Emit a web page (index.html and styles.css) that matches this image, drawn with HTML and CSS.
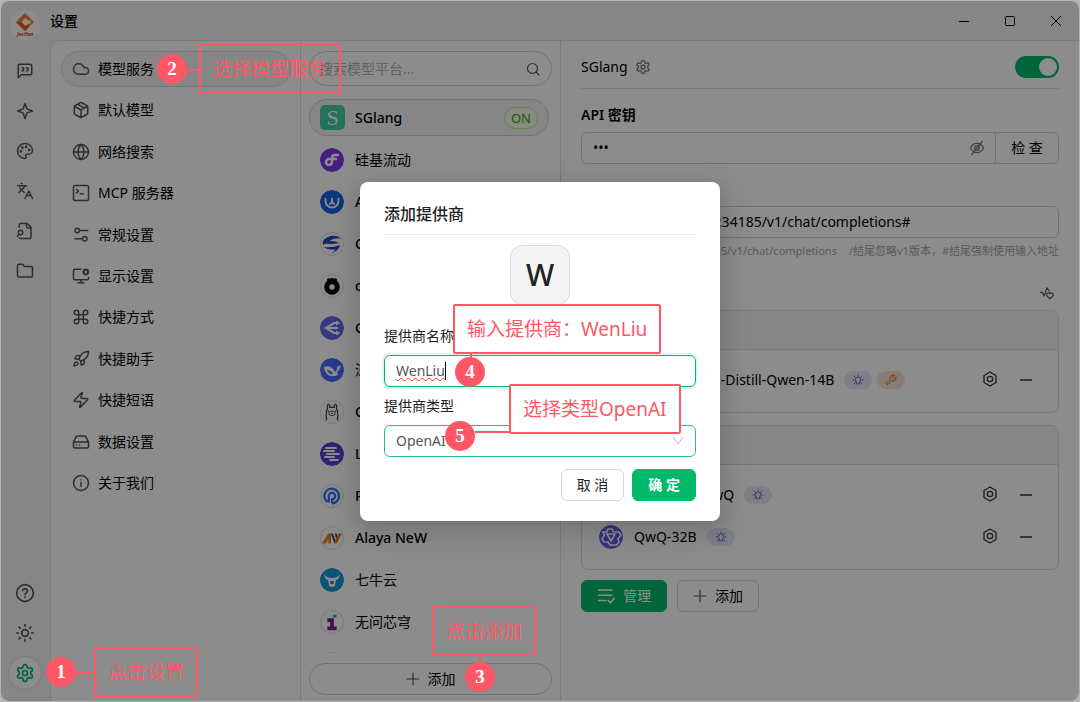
FILE: index.html
```html
<!DOCTYPE html>
<html lang="zh-CN">
<head>
  <meta charset="UTF-8">
  <meta name="viewport" content="width=device-width, initial-scale=1.0">
  <title>设置</title>
  <link rel="stylesheet" href="styles.css">
</head>
<body>

  <!-- Shared icons -->
  <svg class="sprite" aria-hidden="true">
    <symbol id="i-gear" viewBox="0 0 24 24"><path d="M12.2 2h-.4a2 2 0 0 0-2 2v.2a2 2 0 0 1-1 1.7l-.4.3a2 2 0 0 1-2 0l-.2-.1a2 2 0 0 0-2.7.7l-.2.4a2 2 0 0 0 .7 2.7l.2.1a2 2 0 0 1 1 1.7v.5a2 2 0 0 1-1 1.8l-.2.1a2 2 0 0 0-.7 2.7l.2.4a2 2 0 0 0 2.7.7l.2-.1a2 2 0 0 1 2 0l.4.3a2 2 0 0 1 1 1.7v.2a2 2 0 0 0 2 2h.4a2 2 0 0 0 2-2v-.2a2 2 0 0 1 1-1.7l.4-.3a2 2 0 0 1 2 0l.2.1a2 2 0 0 0 2.7-.7l.2-.4a2 2 0 0 0-.7-2.7l-.2-.1a2 2 0 0 1-1-1.8v-.5a2 2 0 0 1 1-1.7l.2-.1a2 2 0 0 0 .7-2.7l-.2-.4a2 2 0 0 0-2.7-.7l-.2.1a2 2 0 0 1-2 0l-.4-.3a2 2 0 0 1-1-1.7V4a2 2 0 0 0-2-2z"/><circle cx="12" cy="12" r="3"/></symbol>
    <symbol id="i-plus" viewBox="0 0 24 24"><path d="M12 2v20M2 12h20"/></symbol>
    <symbol id="i-nut" viewBox="0 0 24 24"><path d="M12 1.5 21 6.7v10.6L12 22.5 3 17.3V6.7z"/><circle cx="12" cy="12" r="4"/></symbol>
    <symbol id="i-bulb" viewBox="0 0 24 24"><path d="M9 19v-3a5.5 5.5 0 1 1 6 0v3zM12 2v2M2 12h2.500M19.500 12H22M4 4l3 3M20 4l-3 3M4 20l3-3M20 20l-3-3"/></symbol>
    <symbol id="i-tool" viewBox="0 0 24 24"><path d="M14.700 6.300a1 1 0 0 0 0 1.400l1.600 1.600a1 1 0 0 0 1.400 0l3.770-3.770a6 6 0 0 1-7.940 7.940l-6.910 6.910a2.120 2.120 0 0 1-3-3l6.910-6.910a6 6 0 0 1 7.940-7.940z"/></symbol>
  </svg>

  <!-- App Window -->
  <div class="window">
    <header class="titlebar">
      <div class="logo">
        <svg viewBox="0 0 30 30"><circle cx="15" cy="15" r="15" fill="#fff"/><path d="M15 3 24 12 15 21 6 12z" fill="#f08a24"/><path d="M6 12 15 21l4-4-5-5z" fill="#e05a1c"/><path d="M15.500 8 20 12l-4.500 4-4-4z" fill="#fff"/><path d="M18 10.500h6v3h-6z" fill="#fff"/><path d="M20 12l2-2 2 2-2 2z" fill="#f08a24"/><text x="15" y="26" text-anchor="middle" class="logo-text">JeeHon</text></svg>
      </div>
      <h1>设置</h1>
      <div class="controls">
        <button aria-label="最小化"><svg viewBox="0 0 10 10"><path d="M0 5.500h10"/></svg></button>
        <button aria-label="最大化"><svg viewBox="0 0 10 10"><rect x=".5" y=".5" width="9" height="9" rx="1"/></svg></button>
        <button aria-label="关闭"><svg viewBox="0 0 10 10"><path d="M0 0l10 10M10 0 0 10"/></svg></button>
      </div>
    </header>

    <div class="body">
      <!-- Icon Rail -->
      <nav class="rail">
        <div class="rail-group">
          <button aria-label="助手"><svg class="icon" viewBox="0 0 24 24"><path d="M21 15a2 2 0 0 1-2 2H7l-4 4V5a2 2 0 0 1 2-2h14a2 2 0 0 1 2 2z"/><path d="M8 12a2 2 0 0 0 2-2V8H8M14 12a2 2 0 0 0 2-2V8h-2"/></svg></button>
          <button aria-label="智能体"><svg class="icon" viewBox="0 0 24 24"><path d="M12 2l2.200 6.300a2.500 2.500 0 0 0 1.500 1.500L22 12l-6.300 2.200a2.500 2.500 0 0 0-1.500 1.500L12 22l-2.200-6.300a2.500 2.500 0 0 0-1.500-1.500L2 12l6.300-2.200a2.500 2.500 0 0 0 1.500-1.500z"/></svg></button>
          <button aria-label="绘画"><svg class="icon" viewBox="0 0 24 24"><circle cx="13.500" cy="6.500" r=".8"/><circle cx="17.500" cy="10.500" r=".8"/><circle cx="8.500" cy="7.500" r=".8"/><circle cx="6.500" cy="12.500" r=".8"/><path d="M12 2C6.500 2 2 6.500 2 12s4.500 10 10 10c.93 0 1.650-.75 1.650-1.690 0-.44-.18-.83-.44-1.120-.29-.29-.44-.65-.44-1.130a1.640 1.640 0 0 1 1.670-1.670h2c3.050 0 5.550-2.500 5.550-5.550C21.960 6.010 17.460 2 12 2z"/></svg></button>
          <button aria-label="翻译"><svg class="icon" viewBox="0 0 24 24"><path d="m5 8 6 6M4 14l6-6 2-3M2 5h12M7 2h1M22 22l-5-10-5 10M14 18h6"/></svg></button>
          <button aria-label="知识库"><svg class="icon" viewBox="0 0 24 24"><path d="M14 2v4a2 2 0 0 0 2 2h4"/><path d="M4.300 7V4a2 2 0 0 1 2-2H15l5 5v13a2 2 0 0 1-2 2H6a2 2 0 0 1-1.700-1"/><circle cx="6" cy="14" r="3"/><path d="m2 19 2-2.500"/></svg></button>
          <button aria-label="文件"><svg class="icon" viewBox="0 0 24 24"><path d="M20 20a2 2 0 0 0 2-2V8a2 2 0 0 0-2-2h-7.900a2 2 0 0 1-1.690-.9L9.600 3.900A2 2 0 0 0 7.930 3H4a2 2 0 0 0-2 2v13a2 2 0 0 0 2 2z"/></svg></button>
        </div>
        <div class="rail-group">
          <button aria-label="帮助"><svg class="icon large" viewBox="0 0 24 24"><circle cx="12" cy="12" r="10"/><path d="M9.090 9a3 3 0 0 1 5.830 1c0 2-3 2-3 4M12 17h.01"/></svg></button>
          <button aria-label="主题"><svg class="icon large" viewBox="0 0 24 24"><circle cx="12" cy="12" r="4"/><path d="M12 2v2M12 20v2M4.900 4.900l1.400 1.400M17.700 17.700l1.400 1.400M2 12h2M20 12h2M6.300 17.700l-1.400 1.400M19.100 4.900l-1.400 1.400"/></svg></button>
          <button class="active" aria-label="设置"><svg class="icon large"><use href="#i-gear"/></svg></button>
        </div>
      </nav>

      <main class="panel">
        <!-- Settings Menu -->
        <nav class="menu">
          <a href="#" class="active"><svg class="icon" viewBox="0 0 24 24"><path d="M17.500 19H9a7 7 0 1 1 6.710-9h1.790a4.500 4.500 0 1 1 0 9z"/></svg>模型服务</a>
          <a href="#"><svg class="icon" viewBox="0 0 24 24"><path d="M11 21.700a2 2 0 0 0 2 0l7-4a2 2 0 0 0 1-1.700V8a2 2 0 0 0-1-1.700l-7-4a2 2 0 0 0-2 0l-7 4A2 2 0 0 0 3 8v8a2 2 0 0 0 1 1.700zM12 22V12M3.300 7l8.700 5 8.700-5M7.500 4.300l9 5.100"/></svg>默认模型</a>
          <a href="#"><svg class="icon" viewBox="0 0 24 24"><circle cx="12" cy="12" r="10"/><path d="M12 2a14.500 14.500 0 0 0 0 20 14.500 14.500 0 0 0 0-20M2 12h20"/></svg>网络搜索</a>
          <a href="#"><svg class="icon" viewBox="0 0 24 24"><rect x="2" y="2" width="20" height="20" rx="2"/><path d="m6 7 2.500 2.500L6 12M11 13h4"/></svg>MCP 服务器</a>
          <a href="#"><svg class="icon" viewBox="0 0 24 24"><circle cx="7" cy="6" r="3"/><circle cx="17" cy="17" r="3"/><path d="M10 6h11M14 17H4"/></svg>常规设置</a>
          <a href="#"><svg class="icon" viewBox="0 0 24 24"><path d="M12 3H4a2 2 0 0 0-2 2v10a2 2 0 0 0 2 2h16a2 2 0 0 0 2-2v-1M12 17v4M8 21h8"/><circle cx="18.500" cy="6.500" r="3"/><path d="M18.500 2.500v1M18.500 9.500v1M14.500 6.500h1M21.500 6.500h1M15.700 3.700l.8.8M20.500 8.500l.8.8M21.300 3.700l-.8.8M16.500 8.500l-.8.8"/></svg>显示设置</a>
          <a href="#"><svg class="icon" viewBox="0 0 24 24"><path d="M15 6v12a3 3 0 1 0 3-3H6a3 3 0 1 0 3 3V6a3 3 0 1 0-3 3h12a3 3 0 1 0-3-3"/></svg>快捷方式</a>
          <a href="#"><svg class="icon" viewBox="0 0 24 24"><path d="M4.500 16.500c-1.500 1.260-2 5-2 5s3.740-.5 5-2c.71-.84.7-2.130-.09-2.910a2.180 2.180 0 0 0-2.910-.09zM12 15l-3-3a22 22 0 0 1 2-3.950A12.880 12.880 0 0 1 22 2c0 2.720-.78 7.500-6 11a22.350 22.350 0 0 1-4 2zM9 12H4s.55-3.030 2-4c1.620-1.080 5 0 5 0M12 15v5s3.030-.55 4-2c1.080-1.620 0-5 0-5"/></svg>快捷助手</a>
          <a href="#"><svg class="icon" viewBox="0 0 24 24"><path d="M4 14a1 1 0 0 1-.78-1.630l9.900-10.200a.5.5 0 0 1 .86.46l-1.920 6.020A1 1 0 0 0 13 10h7a1 1 0 0 1 .78 1.630l-9.900 10.200a.5.5 0 0 1-.86-.46l1.920-6.020A1 1 0 0 0 11 14z"/></svg>快捷短语</a>
          <a href="#"><svg class="icon" viewBox="0 0 24 24"><path d="M22 12H2M5.450 5.110 2 12v6a2 2 0 0 0 2 2h16a2 2 0 0 0 2-2v-6l-3.450-6.890A2 2 0 0 0 16.760 4H7.240a2 2 0 0 0-1.790 1.110zM6 16h.01M10 16h.01"/></svg>数据设置</a>
          <a href="#"><svg class="icon" viewBox="0 0 24 24"><circle cx="12" cy="12" r="10"/><path d="M12 16.500V11M12 7.500h.01"/></svg>关于我们</a>
        </nav>

        <!-- Provider List -->
        <section class="providers">
          <label class="search">
            <input type="text" placeholder="搜索模型平台..." aria-label="搜索模型平台">
            <svg class="icon small" viewBox="0 0 24 24"><circle cx="11" cy="11" r="8.500"/><path d="m17.500 17.500 5 5"/></svg>
          </label>
          <ul class="provider-list">
            <li class="active latin"><span class="letter">S</span>SGlang<span class="on">ON</span></li>
            <li><svg class="avatar" viewBox="0 0 24 24"><circle cx="12" cy="12" r="12" fill="#7c3aed"/><path d="M19 7h-4.500q-2.500 0-2.500 3v4a3 3 0 1 1-3-3h8" fill="none" stroke="#fff" stroke-width="2.600"/></svg>硅基流动</li>
            <li class="latin"><svg class="avatar" viewBox="0 0 24 24"><circle cx="12" cy="12" r="12" fill="#1765e0"/><path d="M5.500 8v3a6.500 6.500 0 0 0 13 0V8M12 8v2q0 4-3 4M12 10q0 4 3 4" fill="none" stroke="#fff" stroke-width="1.800"/></svg>AiHubMix</li>
            <li class="latin"><svg class="avatar ring" viewBox="0 0 24 24"><path d="M2 9q4-6 12-6 5 0 8 3-8-1-13 3 5-1 11 2-6 1-11 1-4-1-7 1z" fill="#2347c5"/><path d="M2 15q9 2 19-2-2 7-10 9 4-2 5-4-8 1-14-3z" fill="#2347c5"/></svg>Cephalon</li>
            <li class="latin"><svg class="avatar ring" viewBox="0 0 24 24"><circle cx="12" cy="13" r="8.500"/><circle cx="8.500" cy="5.500" r="2"/><circle cx="12" cy="5" r="2"/><circle cx="15.500" cy="5.500" r="2"/><circle cx="12" cy="13" r="3" fill="#fff"/></svg>ocoolAI</li>
            <li class="latin"><svg class="avatar" viewBox="0 0 24 24"><circle cx="12" cy="12" r="12" fill="#6366f1"/><path d="M17 7h-3L6 12l8 5h3M7 12h11" fill="none" stroke="#fff" stroke-width="2.200"/><path d="M16 4.500 20 7l-4 2.500zM16 14.500l4 2.500-4 2.500z" fill="#fff"/></svg>GPUStack</li>
            <li><svg class="avatar" viewBox="0 0 24 24"><circle cx="12" cy="12" r="12" fill="#4d6bfe"/><path d="M4 9q5-2 8 1 2 2 3 4 3-2 2-6 2 1 4-1-1 5-4 7l1 3q-7 3-11-1-3-3-3-7z" fill="#fff"/><path d="M7 12q4 0 6 4-4 1-6-4" fill="#4d6bfe"/></svg>深度求索</li>
            <li class="latin"><svg class="avatar ring" viewBox="0 0 24 24"><path d="M6 21v-3q-1-2 0-4-1-3 1-5V5q1-3 2.500 0v2h5V5q1-3 2.500 0v4q2 2 1 5 1 2 0 4v3" fill="none" stroke="#444" stroke-width="1.400"/><ellipse cx="12" cy="13.500" rx="3.500" ry="2.500" fill="none" stroke="#444"/><path d="M8 11h.01M16 11h.01M12 13.500h.01" stroke="#222" stroke-width="1.500" stroke-linecap="round"/></svg>Ollama</li>
            <li class="latin"><svg class="avatar" viewBox="0 0 24 24"><circle cx="12" cy="12" r="12" fill="#5b3fd6"/><path d="M6 6h10M4 9h10M7 12h12M5 15h9M10 18h8" stroke="#fff" stroke-width="1.800" stroke-linecap="round"/></svg>LM Studio</li>
            <li class="latin"><svg class="avatar ring" viewBox="0 0 24 24"><path d="M7 18.500A8 8 0 1 1 12 20M12 20v-4.500a3.500 3.500 0 1 0-3.500-3.500v7" fill="none" stroke="#2874ff" stroke-width="2.400"/></svg>PPIO 派欧云</li>
            <li class="latin"><svg class="avatar ring" viewBox="0 0 24 24"><path d="M1 18 8 7h3v11H8v-4l-3 4z" fill="#e8811a"/><path d="M11 7h2l3 8-1.500 3zM15 7h2l1 4-1 3z" fill="#444"/><path d="M14 18l5-11h4l-6 11z" fill="#e8811a"/></svg>Alaya NeW</li>
            <li><svg class="avatar" viewBox="0 0 24 24"><circle cx="12" cy="12" r="12" fill="#159bd3"/><path d="M4 6q2 4 8 4t8-4q-1 6-4 6l-1 6q-3 2-6 0l-1-6Q5 12 4 6z" fill="#fff"/><path d="M10 13h4l-.5 3h-3z" fill="#159bd3"/></svg>七牛云</li>
            <li><svg class="avatar ring" viewBox="0 0 24 24"><path d="M7 8h7v9h3v4H7v-4h3v-5H7z" fill="#86198f"/><path d="M13 4h4v3h-4z" fill="#22a7e0"/></svg>无问芯穹</li>
            <li><svg class="avatar ring" viewBox="0 0 24 24"><path d="M8 1h8v10H8z" fill="#16a36a"/></svg></li>
          </ul>
          <button class="add-provider"><svg class="icon small"><use href="#i-plus"/></svg>添加</button>
        </section>

        <!-- Provider Detail -->
        <section class="detail">
          <div class="detail-head">
            <h2>SGlang</h2>
            <svg class="icon gray"><use href="#i-gear"/></svg>
            <input type="checkbox" class="switch" aria-label="启用" checked>
          </div>
          <h3><label for="api-key">API 密钥</label></h3>
          <div class="field">
            <input type="password" id="api-key" value="abc">
            <svg class="icon gray" viewBox="0 0 24 24"><path d="M2 12q4-7 10-7t10 7q-4 7-10 7T2 12zM20 2 4 22"/><circle cx="12" cy="12" r="3.500"/></svg>
            <button>检 查</button>
          </div>
          <h3><label for="api-url">API 地址</label></h3>
          <div class="field">
            <input type="text" id="api-url" value="http://10.12.40.128:34185/v1/chat/completions#">
          </div>
          <p class="hint"><span>http://10.12.40.128:34185/v1/chat/completions</span><span>/结尾忽略v1版本，#结尾强制使用输入地址</span></p>
          <div class="models-head">
            <h3>模型</h3>
            <svg class="icon small" viewBox="0 0 24 24"><path d="M1 11h3l3 6 5-14 4 6"/><path d="M17 22l-5-5a3 3 0 0 1 5-4 3 3 0 0 1 5 4z"/></svg>
          </div>

          <div class="card">
            <div class="card-head">deepseek</div>
            <div class="model">
              <svg class="avatar" viewBox="0 0 24 24"><circle cx="12" cy="12" r="12" fill="#4d6bfe"/></svg>
              <span>DeepSeek-R1-Distill-Qwen-14B</span>
              <span class="tag"><svg class="icon tiny"><use href="#i-bulb"/></svg></span>
              <span class="tag tool"><svg class="icon tiny"><use href="#i-tool"/></svg></span>
              <button class="nut" aria-label="模型设置"><svg class="icon"><use href="#i-nut"/></svg></button>
              <button aria-label="移除" class="minus"></button>
            </div>
          </div>

          <div class="card">
            <div class="card-head">qwen</div>
            <div class="model">
              <svg class="avatar" viewBox="0 0 24 24"><circle cx="12" cy="12" r="12" fill="#615ced"/></svg>
              <span>Qwen-3.0-QwQ</span>
              <span class="tag"><svg class="icon tiny"><use href="#i-bulb"/></svg></span>
              <button class="nut" aria-label="模型设置"><svg class="icon"><use href="#i-nut"/></svg></button>
              <button aria-label="移除" class="minus"></button>
            </div>
            <div class="model">
              <svg class="avatar" viewBox="0 0 24 24"><circle cx="12" cy="12" r="12" fill="#615ced"/><path d="M9 4h4l1.500 3H20l2 3-3 4 1 3-2 3h-4l-3 0-2-3H5l-2-3 2.500-4L4 7h4z" fill="none" stroke="#fff" stroke-width="1.600"/><path d="M8 9h8l-4 7z" fill="none" stroke="#fff" stroke-width="1.600"/></svg>
              <span>QwQ-32B</span>
              <span class="tag"><svg class="icon tiny"><use href="#i-bulb"/></svg></span>
              <button class="nut" aria-label="模型设置"><svg class="icon"><use href="#i-nut"/></svg></button>
              <button aria-label="移除" class="minus"></button>
            </div>
          </div>

          <div class="actions">
            <button class="btn primary"><svg class="icon" viewBox="0 0 24 24"><path d="M2 4h18M2 11h18M2 18h10M15 18l3 3 5-6"/></svg>管理</button>
            <button class="btn"><svg class="icon small"><use href="#i-plus"/></svg>添加</button>
          </div>
        </section>
      </main>
    </div>

    <!-- Add Provider Dialog -->
    <div class="mask">
      <form class="modal" role="dialog" aria-labelledby="modal-title">
        <h2 id="modal-title">添加提供商</h2>
        <div class="modal-avatar">W</div>
        <label for="name">提供商名称</label>
        <div class="box focused">
          <input type="text" id="name" value="WenLiu" size="6" spellcheck="false">
          <span class="caret"></span>
        </div>
        <label for="type">提供商类型</label>
        <div class="box">
          <select id="type"><option>OpenAI</option></select>
          <svg class="arrow" viewBox="0 0 12 12"><path d="M1 2l5 7 5-7"/></svg>
        </div>
        <div class="modal-actions">
          <button type="button" class="btn">取 消</button>
          <button type="button" class="btn primary">确 定</button>
        </div>
      </form>
    </div>
  </div>

  <!-- Step Callouts -->
  <div class="note n1">点击设置</div><i class="line l1"></i><b class="step s1">1</b>
  <div class="note n2">选择模型服务</div><i class="line l2"></i><b class="step s2">2</b>
  <div class="note n3">点击添加</div><i class="line l3"></i><b class="step s3">3</b>
  <div class="note solid n4">输入提供商：WenLiu</div><i class="line l4"></i><b class="step s4">4</b>
  <div class="note solid n5">选择类型OpenAI</div><i class="line l5"></i><b class="step s5">5</b>

</body>
</html>
```
FILE: styles.css
```css
/* Global Styles */
* {
  box-sizing: border-box;
}

body {
  margin: 0;
  padding: 1px;
  height: 100vh;
  overflow: hidden;
  background: #b4b4b4;
  font-family: "Noto Sans", "Noto Sans CJK SC", sans-serif;
  font-size: 14px;
  line-height: 22px;
  color: #000;
}

button,
input,
select {
  font: inherit;
  color: inherit;
  padding: 0;
  border: none;
  background: none;
  outline: none;
}

button {
  cursor: pointer;
}

h1,
h2,
h3,
p,
ul {
  margin: 0;
  padding: 0;
  font-size: 14px;
  font-weight: 400;
}

.sprite {
  position: absolute;
  width: 0;
  height: 0;
}

/* Icons */
.icon {
  width: 18px;
  height: 18px;
  flex: none;
  fill: none;
  stroke: #555;
  stroke-width: 2;
  stroke-linecap: round;
  stroke-linejoin: round;
}

.icon.large {
  width: 20px;
  height: 20px;
}

.icon.small {
  width: 14px;
  height: 14px;
}

.icon.tiny {
  width: 12px;
  height: 12px;
}

.icon.gray {
  width: 16px;
  height: 16px;
  stroke: #777;
}

/* Window */
.window {
  position: relative;
  height: 100%;
  display: flex;
  flex-direction: column;
  border-radius: 8px;
  overflow: hidden;
  background: #f4f4f4;
}

.titlebar {
  height: 39px;
  flex: none;
  display: flex;
  align-items: center;
}

.titlebar h1 {
  font-weight: 500;
}

.logo {
  width: 49px;
  height: 30px;
  padding-left: 9px;
  align-self: end;
}

.logo svg {
  width: 30px;
  height: 30px;
  display: block;
}

.logo-text {
  font-size: 5px;
  font-weight: bold;
  font-style: italic;
  fill: #d9481c;
}

.controls {
  margin-left: auto;
  display: flex;
}

.controls button {
  width: 46px;
  height: 39px;
}

.controls svg {
  width: 10px;
  height: 10px;
  fill: none;
  stroke: #000;
  overflow: visible;
}

.body {
  flex: 1;
  display: flex;
  min-height: 0;
}

/* Icon Rail */
.rail {
  width: 49px;
  flex: none;
  display: flex;
  flex-direction: column;
  justify-content: space-between;
  padding: 15px 8px 12px;
}

.rail-group {
  display: flex;
  flex-direction: column;
  gap: 8px;
}

.rail button {
  width: 32px;
  height: 32px;
  display: flex;
  align-items: center;
  justify-content: center;
  border-radius: 50%;
}

.rail .active {
  background: #fff;
  box-shadow: 0 0 0 1px #e2e2e2;
}

.rail .active .icon {
  stroke: #00b96b;
}

.panel {
  flex: 1;
  min-width: 0;
  display: flex;
  background: #fff;
  border: 1px solid #e4e4e4;
  border-width: 1px 0 0 1px;
  border-radius: 10px 0 0 0;
}

/* Settings Menu */
.menu {
  width: 249px;
  height: 470px;
  flex: none;
  display: flex;
  flex-direction: column;
  justify-content: space-between;
  padding: 10px 9px 10px 10px;
}

.menu a {
  height: 36px;
  display: flex;
  align-items: center;
  gap: 8px;
  padding: 0 10px;
  border: 1px solid transparent;
  border-radius: 18px;
  color: #000;
  text-decoration: none;
}

.menu .active {
  background: #f4f4f4;
  border-color: #d9d9d9;
}

/* Provider List */
.providers {
  width: 261px;
  flex: none;
  display: flex;
  flex-direction: column;
  padding: 10px 8px 6px;
  border: 1px solid #e0e0e0;
  border-width: 0 1px;
}

.search {
  height: 35px;
  flex: none;
  display: flex;
  align-items: center;
  padding: 0 11px 0 9px;
  border: 1px solid #d0d0d0;
  border-radius: 18px;
}

.search input {
  flex: 1;
  min-width: 0;
}

.search input::placeholder {
  color: #b5b5b5;
}

.provider-list {
  flex: 1;
  min-height: 0;
  overflow: hidden;
  margin: 13px 3px 10px 0;
  display: flex;
  flex-direction: column;
  gap: 5px;
  list-style: none;
}

.provider-list li {
  height: 37px;
  flex: none;
  display: flex;
  align-items: center;
  gap: 10px;
  padding: 0 10px;
  border: 1px solid transparent;
  border-radius: 18px;
  line-height: 20px;
}

.provider-list .latin {
  font-weight: 500;
}

.provider-list .active {
  background: #f4f4f4;
  border-color: #d0d0d0;
}

.avatar {
  width: 24px;
  height: 24px;
  flex: none;
  border-radius: 50%;
}

.provider-list .avatar {
  margin-right: 1px;
}

.ring {
  border: 1px solid #dedede;
}

.letter {
  width: 25px;
  height: 25px;
  border-radius: 5px;
  background: #43cfa5;
  color: #fff;
  font-family: "Liberation Serif", serif;
  font-size: 22px;
  font-weight: 400;
  line-height: 25px;
  text-align: center;
}

.on {
  margin-left: auto;
  padding: 0 6px;
  border: 1px solid #b7eb8f;
  border-radius: 11px;
  background: #f6ffed;
  color: #389e0d;
  font-size: 13px;
  font-weight: 400;
}

.add-provider {
  height: 32px;
  flex: none;
  display: flex;
  align-items: center;
  justify-content: center;
  gap: 8px;
  border: 1px solid #d0d0d0;
  border-radius: 16px;
}

/* Provider Detail */
.detail {
  flex: 1;
  min-width: 0;
  padding: 5px 20px;
}

.detail h3 {
  margin: 15px 0 6px;
  font-weight: 600;
}

.detail .field + h3 {
  margin-top: 14px;
}

.detail-head {
  height: 43px;
  display: flex;
  align-items: center;
  gap: 7px;
  border-bottom: 1px solid #e4e4e4;
}

.switch {
  appearance: none;
  width: 44px;
  height: 22px;
  margin: 0 0 0 auto;
  padding: 2px;
  border-radius: 11px;
  background: #00b96b;
}

.switch::before {
  content: "";
  display: block;
  width: 18px;
  height: 18px;
  margin-left: auto;
  border-radius: 50%;
  background: #fff;
}

.field {
  height: 32px;
  display: flex;
  align-items: center;
  padding-left: 11px;
  border: 1px solid #d0d0d0;
  border-radius: 6px;
}

.field input {
  flex: 1;
  min-width: 0;
}

.field button {
  width: 63px;
  height: 30px;
  margin-left: 10px;
  border-left: 1px solid #d0d0d0;
}

.hint {
  display: flex;
  justify-content: flex-end;
  gap: 12px;
  margin-top: 2px;
  color: #a6a6a6;
  font-size: 11px;
  white-space: nowrap;
}

.models-head {
  display: flex;
  align-items: center;
  justify-content: space-between;
  height: 48px;
  padding: 13px 5px 0 0;
}

.card {
  margin-bottom: 12px;
  padding-bottom: 11px;
  border: 1px solid #dcdcdc;
  border-radius: 8px;
  overflow: hidden;
}

.card-head {
  height: 39px;
  padding: 8px 16px;
  margin-bottom: 9px;
  background: #f4f4f4;
  border-bottom: 1px solid #dcdcdc;
}

.model {
  height: 42px;
  display: flex;
  align-items: center;
  padding: 0 26px 0 17px;
}

.model .avatar {
  margin-right: 11px;
}

.tag {
  width: 28px;
  height: 18px;
  display: flex;
  align-items: center;
  justify-content: center;
  margin-left: 10px;
  border-radius: 9px;
  background: #e6e8f7;
}

.tag .icon {
  stroke: #6372bd;
}

.tag + .tag {
  margin-left: 5px;
}

.tag.tool {
  background: #f6e3d7;
}

.tool .icon {
  stroke: #d46b08;
}

.nut {
  height: 18px;
  margin-left: auto;
}

.nut .icon {
  width: 16px;
  height: 16px;
  stroke: #333;
}

.minus {
  width: 12px;
  height: 2px;
  margin-left: 22px;
  background: #666;
}

.actions {
  display: flex;
  gap: 10px;
  margin-top: -2px;
}

.btn {
  height: 32px;
  display: flex;
  align-items: center;
  gap: 8px;
  padding: 0 15px;
  border: 1px solid #d5d5d5;
  border-radius: 6px;
}

.btn.primary {
  background: #00b96b;
  border-color: #00b96b;
  color: #fff;
}

.primary .icon {
  stroke: #fff;
}

/* Dialog */
.mask {
  position: absolute;
  inset: 0;
  display: flex;
  align-items: center;
  justify-content: center;
  background: rgba(0, 0, 0, 0.45);
}

.modal {
  width: 360px;
  display: flex;
  flex-direction: column;
  padding: 20px 24px;
  border-radius: 8px;
  background: #fff;
  box-shadow: 0 6px 16px rgba(0, 0, 0, 0.08), 0 9px 28px 8px rgba(0, 0, 0, 0.1);
  color: #222;
}

.modal h2 {
  padding-bottom: 8px;
  border-bottom: 1px solid #ececec;
  font-size: 16px;
  font-weight: 500;
  line-height: 24px;
}

.modal-avatar {
  width: 60px;
  height: 60px;
  align-self: center;
  margin: 10px 0 20px;
  border: 1px solid #ddd;
  border-radius: 12px;
  background: #f4f4f4;
  font-size: 30px;
  font-weight: 500;
  line-height: 58px;
  text-align: center;
}

.modal label {
  margin-bottom: 8px;
}

.box {
  height: 32px;
  display: flex;
  align-items: center;
  margin-bottom: 8px;
  padding: 0 11px;
  border: 1px solid #21c07c;
  border-radius: 6px;
  color: #555;
}

.focused {
  border-color: #00b96b;
  box-shadow: 0 0 0 2px #dcf8ea;
}

.box input {
  field-sizing: content;
  text-decoration: underline wavy #f33 1px;
}

.caret {
  width: 1px;
  height: 18px;
  background: #000;
}

.box select {
  flex: 1;
  appearance: none;
}

.arrow {
  width: 12px;
  height: 12px;
  fill: none;
  stroke: #bbb;
}

.modal-actions {
  display: flex;
  justify-content: flex-end;
  gap: 8px;
  margin-top: 4px;
}

.modal .primary {
  font-weight: 600;
}

/* Step Callouts */
.note {
  position: absolute;
  height: 50px;
  padding: 0 12px;
  border: 2px solid #ff5766;
  border-radius: 2px;
  color: #ff5766;
  font-size: 19px;
  line-height: 46px;
  white-space: nowrap;
}

.solid {
  background: #fff;
}

.step {
  position: absolute;
  width: 30px;
  height: 30px;
  border-radius: 50%;
  background: #ff5766;
  color: #fff;
  font-family: "Liberation Serif", serif;
  font-size: 19px;
  line-height: 30px;
  text-align: center;
}

.line {
  position: absolute;
  width: 18px;
  height: 2px;
  background: #ff5766;
}

.n1 { left: 94px; top: 647px; }
.l1 { left: 76px; top: 672px; }
.s1 { left: 46px; top: 657px; }

.n2 { left: 199px; top: 44px; }
.l2 { left: 184px; top: 69px; }
.s2 { left: 157px; top: 54px; }

.n3 { left: 432px; top: 606px; }
.l3 { left: 479px; top: 655px; width: 2px; height: 10px; }
.s3 { left: 465px; top: 662px; }

.n4 { left: 453px; top: 304px; }
.l4 { left: 470px; top: 352px; width: 2px; height: 8px; }
.s4 { left: 455px; top: 357px; }

.n5 { left: 509px; top: 384px; }
.l5 { left: 475px; top: 431px; width: 35px; }
.s5 { left: 445px; top: 421px; }
```
